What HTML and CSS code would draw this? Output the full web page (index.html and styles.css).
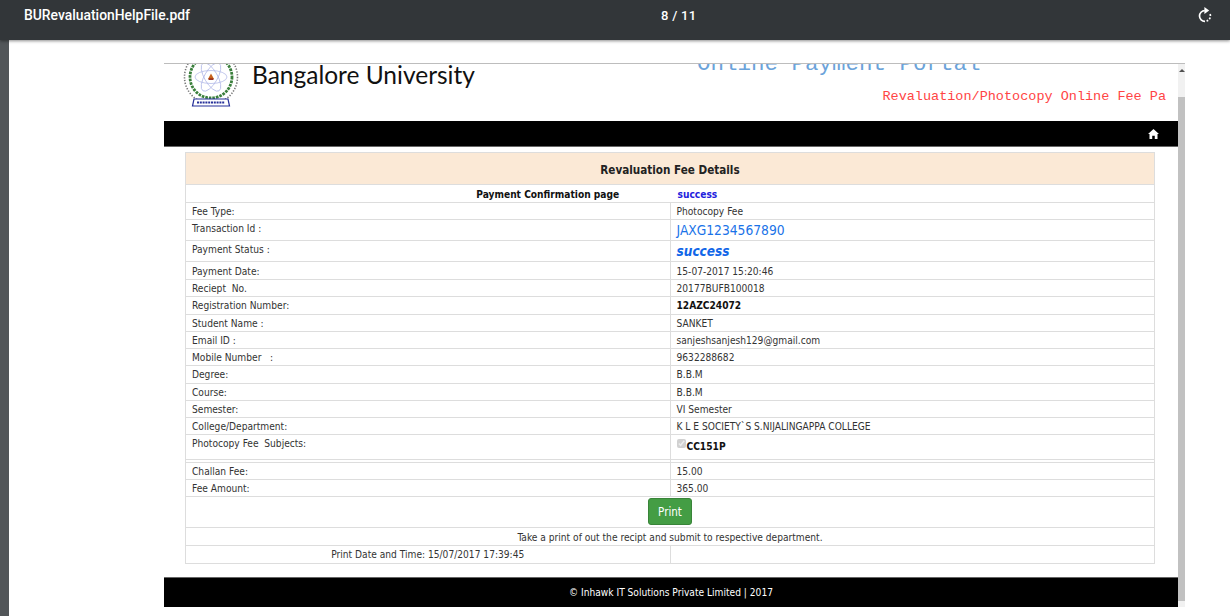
FILE: index.html
```html
<!DOCTYPE html>
<html lang="en">
<head>
<meta charset="utf-8">
<title>BURevaluationHelpFile.pdf</title>
<link rel="stylesheet" href="styles.css">
</head>
<body>
<header class="toolbar">
  <div class="doc-title">BURevaluationHelpFile.pdf</div>
  <div class="pages">8 / 11</div>
  <svg class="rotate" viewBox="0 0 16 18" width="16" height="18" aria-hidden="true">
    <path d="M7.8 4.6 A5.4 5.4 0 1 0 8 15.4" fill="none" stroke="#fff" stroke-width="1.7"/>
    <path d="M9.6 15 A5.4 5.4 0 0 0 12.6 7" fill="none" stroke="#fff" stroke-width="1.7" stroke-dasharray="1.8 1.5"/>
    <path d="M7.4 1 L12.2 4.6 L7.4 8 Z" fill="#fff"/>
  </svg>
</header>
<div class="viewer">
  <div class="gutter"></div>
  <main class="sheet">
    <div class="shot">
      <div class="site">
        <div class="masthead">
          <div class="brand">
            <svg class="crest" viewBox="0 0 58 54" width="58" height="54" aria-hidden="true">
              <circle cx="29" cy="22" r="26.5" fill="none" stroke="#777" stroke-width="1.6" stroke-dasharray="1.3 1.5"/>
              <circle cx="29" cy="22" r="21" fill="none" stroke="#3a7f3c" stroke-width="2.8" stroke-dasharray="2.6 1"/>
              <g fill="none" stroke="#b4bbe8" stroke-width=".8">
                <ellipse cx="29" cy="22" rx="16" ry="6.5"/>
                <ellipse cx="29" cy="22" rx="16" ry="6.5" transform="rotate(60 29 22)"/>
                <ellipse cx="29" cy="22" rx="16" ry="6.5" transform="rotate(120 29 22)"/>
              </g>
              <path d="M29 18.5 L32 24 H26 Z" fill="#c8621c"/>
              <path d="M26.5 23.5 h5 v1.4 h-5z" fill="#8a1a10"/>
              <path d="M12 44 h34 l1.5 7 h-37z" fill="#fff" stroke="#26309a" stroke-width="1.2"/>
              <path d="M15 47.5 h28" stroke="#26309a" stroke-width="2.2" stroke-dasharray="2 .8"/>
            </svg>
            <span class="uni-name">Bangalore University</span>
          </div>
          <div class="portal">
            <div class="portal-title">Online Payment Portal</div>
            <div class="portal-sub">Revaluation/Photocopy Online Fee Pa</div>
          </div>
        </div>
        <nav class="navbar">
          <svg viewBox="0 0 12 11" width="11" height="10" aria-hidden="true"><path d="M6 0 L12 5.6 L10.4 5.6 L10.4 11 L7.4 11 L7.4 7.4 L4.6 7.4 L4.6 11 L1.6 11 L1.6 5.6 L0 5.6 Z" fill="#fff"/></svg>
        </nav>
        <div class="content">
          <table class="fees">
            <tr class="r-title"><th colspan="2">Revaluation Fee Details</th></tr>
            <tr class="r-confirm"><td class="confirm-l">Payment Confirmation page</td><td class="confirm-r">success</td></tr>
            <tr><td>Fee Type:</td><td>Photocopy Fee</td></tr>
            <tr class="r-txn"><td>Transaction Id :</td><td class="big-blue">JAXG1234567890</td></tr>
            <tr class="r-txn"><td>Payment Status :</td><td class="big-status">success</td></tr>
            <tr class="r-low"><td>Payment Date:</td><td>15-07-2017 15:20:46</td></tr>
            <tr><td>Reciept &nbsp;No.</td><td>20177BUFB100018</td></tr>
            <tr class="r-tall"><td>Registration Number:</td><td class="strong">12AZC24072</td></tr>
            <tr><td>Student Name :</td><td>SANKET</td></tr>
            <tr><td>Email ID :</td><td>sanjeshsanjesh129@gmail.com</td></tr>
            <tr><td>Mobile Number &nbsp; :</td><td>9632288682</td></tr>
            <tr class="r-tall"><td>Degree:</td><td>B.B.M</td></tr>
            <tr><td>Course:</td><td>B.B.M</td></tr>
            <tr><td>Semester:</td><td>VI Semester</td></tr>
            <tr><td>College/Department:</td><td>K L E SOCIETY`S S.NIJALINGAPPA COLLEGE</td></tr>
            <tr class="r-subj"><td>Photocopy Fee &nbsp;Subjects:</td><td class="subject"><input class="tick" type="checkbox" checked disabled><span class="strong">CC151P</span></td></tr>
            <tr class="r-gap"><td></td><td></td></tr>
            <tr><td>Challan Fee:</td><td>15.00</td></tr>
            <tr><td>Fee Amount:</td><td>365.00</td></tr>
            <tr class="r-print"><td colspan="2"><button class="print" type="button">Print</button></td></tr>
            <tr class="r-low"><td colspan="2" class="center">Take a print of out the recipt and submit to respective department.</td></tr>
            <tr class="r-tall"><td class="center">Print Date and Time: 15/07/2017 17:39:45</td><td></td></tr>
          </table>
        </div>
        <footer class="foot">© Inhawk IT Solutions Private Limited | 2017</footer>
      </div>
      <div class="scrollbar"><div class="thumb"></div></div>
    </div>
  </main>
</div>
</body>
</html>
```
FILE: styles.css
```css
html, body { margin: 0; padding: 0; height: 616px; overflow: hidden; background: #fff; }
body { font-family: "DejaVu Sans Condensed", "DejaVu Sans", sans-serif; }

.toolbar {
  height: 40px; background: #323639; color: #fff;
  display: grid; grid-template-columns: 637px auto 1fr; align-items: center;
  padding: 0 17px 0 24px; box-sizing: border-box;
  box-shadow: 0 1px 3px rgba(0,0,0,.45);
  position: relative;
}
.doc-title { font: 500 13.9px Roboto, sans-serif; margin-top: -10px; }
.pages { font: 500 13px Roboto, sans-serif; letter-spacing: .3px; margin-top: -10px; }
.rotate { justify-self: end; margin-top: -10px; }

.viewer { display: flex; height: 576px; }
.gutter { width: 9px; background: #525659; }
.sheet { flex: 1; background: #fff; padding: 23px 0 0 155px; }
.shot { display: flex; width: 1021px; border-top: 1px solid #bdbdbd; height: 543px; }
.site { width: 1014px; display: flex; flex-direction: column; }
.site > * { flex: none; }

.masthead { height: 57px; overflow: hidden; display: flex; justify-content: space-between; }
.brand { display: flex; align-items: flex-start; margin-left: 18px; }
.crest { margin-top: -9px; flex: none; }
.uni-name { font: 400 24.5px/30px Lato, sans-serif; color: #111; margin: -4px 0 0 12px; white-space: nowrap; }
.portal { width: 475px; font-family: "Liberation Mono", monospace; }
.portal-title { font-size: 22.5px; line-height: 24px; color: #6ba3da; margin: -12px 0 0 -6px; white-space: nowrap; }
.portal-sub { font-size: 13.5px; line-height: 16px; color: #f44; margin-top: 13px; text-align: right; padding-right: 12px; white-space: nowrap; }

.navbar { height: 26px; background: #000; display: flex; justify-content: flex-end; align-items: center; padding-right: 19px; border-bottom: 1px solid #666; box-sizing: border-box; }

.content { padding: 5px 23px 13px 21px; }
.fees { width: 970px; border-collapse: collapse; table-layout: fixed; font-size: 10.15px; color: #333; }
.fees td, .fees th { border: 1px solid #ddd; padding: 2px 6px 0; vertical-align: top; height: 14px; line-height: 14px; }
.fees td:first-child:not([colspan]) { width: 472px; }
.fees .r-tall td { height: 17px; line-height: 17px; padding-top: 0; }
.fees .r-low td { height: 15px; line-height: 15px; }
.fees .r-title th { height: 28px; padding: 3px 0 0; background: #fbe9d6; font: 700 11.6px/28px "DejaVu Sans Condensed", sans-serif; color: #222; }
.fees .r-confirm td { height: 15px; line-height: 15px; }
.fees .confirm-l { text-align: center; font-weight: 700; color: #111; border-right-color: transparent; padding-left: 246px; }
.fees .confirm-r { color: #2222dd; font-weight: 700; padding-left: 7px; }
.fees .r-txn td { height: 18px; }
.fees .r-txn .big-blue { font: 13.7px/20px "DejaVu Sans Condensed", sans-serif; color: #1a73e8; padding-top: 0; height: 20px; }
.fees .r-txn .big-status { font: italic 700 13.5px/20px "DejaVu Sans Condensed", sans-serif; color: #1166e8; padding-top: 0; height: 20px; }
.strong { font-weight: 700; color: #111; }
.fees .r-subj td { height: 22px; }
.fees .r-subj .subject { line-height: 24px; padding-top: 0; height: 24px; }
.tick { width: 9px; height: 9px; margin: 0 1px 0 0; vertical-align: 2px; }
.fees .r-gap td { height: 2px; padding: 0; line-height: 2px; }
.fees .r-print td { height: 29px; text-align: center; padding: 1px 0 0; }
.print { width: 44px; height: 27px; background: #449d44; border: 1px solid #398439; border-radius: 3px; color: #fff; font: 11.5px "DejaVu Sans Condensed", sans-serif; padding: 0; display: block; margin: 0 auto; }
.center { text-align: center; }

.foot { height: 30px; background: #000; color: #fff; font: 400 10.15px/30px "DejaVu Sans Condensed", sans-serif; text-align: center; border-top: 1px solid #666; box-sizing: border-box; }

.scrollbar { width: 7px; background: #f1f1f1; height: 543px; box-sizing: border-box; }
.scrollbar::before { content: ""; display: block; width: 0; height: 0; margin: 5px auto 25px; border-left: 3px solid transparent; border-right: 3px solid transparent; border-bottom: 3px solid #505050; }
.thumb { height: 504px; background: #c1c1c1; }
```
